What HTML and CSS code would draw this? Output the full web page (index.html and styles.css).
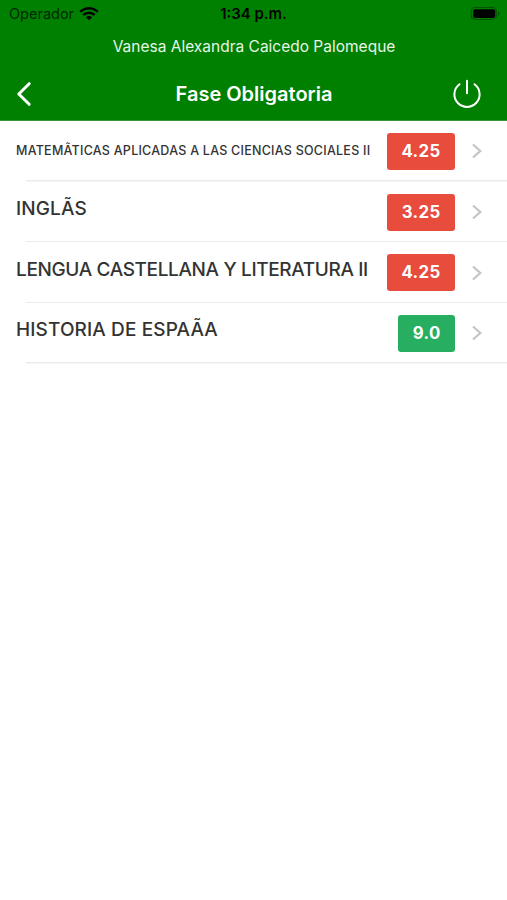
FILE: index.html
```html
<!DOCTYPE html>
<html lang="es">
<head>
    <meta charset="UTF-8">
    <meta name="viewport" content="width=device-width, initial-scale=1.0">
    <title>Fase Obligatoria</title>
    <link rel="stylesheet" href="styles.css">
</head>
<body>
    <header class="header">
        <div class="status-bar">
            <div class="carrier">
                <span class="carrier-name">Operador</span>
                <svg class="wifi" width="20" height="14" viewBox="0 0 20 14" fill="none" stroke="#000" stroke-width="2.5">
                    <path d="M1.2 4.8C6.3 0 13.7 0 18.8 4.8"/>
                    <path d="M4.3 8C7.6 4.9 12.4 4.9 15.7 8"/>
                    <path d="M10 13.2L6.9 10.2C8.7 8.6 11.3 8.6 13.1 10.2Z" fill="#000" stroke="none"/>
                </svg>
            </div>
            <span class="time">1:34 p.m.</span>
            <svg class="battery" width="30" height="14" viewBox="0 0 30 14">
                <rect x="1.3" y=".5" width="25" height="12" rx="3.8" fill="none" stroke="#000" stroke-opacity=".35" stroke-width="1.2"/>
                <rect x="3.2" y="2.2" width="22" height="8.8" rx="2" fill="#000"/>
                <path d="M28 4.5v4c1.8-.8 1.8-3.2 0-4z" fill="#000" fill-opacity=".4"/>
            </svg>
        </div>
        <div class="student"><span class="student-name">Vanesa Alexandra Caicedo Palomeque</span></div>
        <div class="nav-bar">
            <svg class="back" width="18" height="28" viewBox="0 0 18 28" fill="none" stroke="#fff" stroke-width="3" stroke-linecap="round" stroke-linejoin="round">
                <path d="M13.2 3.7L2.8 14L13.2 24.3"/>
            </svg>
            <h1>Fase Obligatoria</h1>
            <svg class="power" width="30" height="30" viewBox="0 0 30 30" fill="none" stroke="#fff" stroke-width="2" stroke-linecap="round">
                <path d="M15 1.8V14.2"/>
                <path d="M7.5 5.2A12.6 12.6 0 1 0 22.5 5.2"/>
            </svg>
        </div>
    </header>

    <ul class="subjects">
        <li class="subject">
            <span class="name name-small">MATEMÃTICAS APLICADAS A LAS CIENCIAS SOCIALES II</span>
            <span class="grade fail">4.25</span>
            <svg class="arrow" width="12" height="18" viewBox="0 0 12 18"><path d="M2 2.5L9.3 9L2 15.5"/></svg>
        </li>
        <li class="subject">
            <span class="name">INGLÃS</span>
            <span class="grade fail">3.25</span>
            <svg class="arrow" width="12" height="18" viewBox="0 0 12 18"><path d="M2 2.5L9.3 9L2 15.5"/></svg>
        </li>
        <li class="subject">
            <span class="name name-long">LENGUA CASTELLANA Y LITERATURA II</span>
            <span class="grade fail">4.25</span>
            <svg class="arrow" width="12" height="18" viewBox="0 0 12 18"><path d="M2 2.5L9.3 9L2 15.5"/></svg>
        </li>
        <li class="subject">
            <span class="name">HISTORIA DE ESPAÃA</span>
            <span class="grade pass">9.0</span>
            <svg class="arrow" width="12" height="18" viewBox="0 0 12 18"><path d="M2 2.5L9.3 9L2 15.5"/></svg>
        </li>
    </ul>
</body>
</html>
```
FILE: styles.css
```css
* {
    box-sizing: border-box;
}

body {
    margin: 0;
    min-height: 100vh;
    font-family: Inter, 'Liberation Sans', sans-serif;
    background-color: #fff;
    color: #333;
}

.header {
    height: 121px;
    background-color: #008000;
    border-bottom: 1px solid #389438;
    color: #fff;
}

.status-bar {
    display: grid;
    grid-template-columns: 1fr auto 1fr;
    align-items: center;
    height: 27px;
    padding: 0 7px;
    color: #000;
}

.carrier {
    display: flex;
    align-items: center;
    gap: 5px;
    padding-left: 2px;
    font-size: 14.5px;
}

.carrier-name {
    color: #002800;
}

.time {
    font-size: 14.9px;
    font-weight: 600;
}

.battery {
    justify-self: end;
}

.student {
    height: 40px;
    padding-left: 1px;
    line-height: 40px;
    text-align: center;
    font-size: 15.5px;
    color: #e6f5e6;
}

.nav-bar {
    display: grid;
    grid-template-columns: 1fr auto 1fr;
    align-items: center;
    height: 53px;
    padding: 0 25px 0 26px;
}

.back {
    margin-left: -10px;
}

h1 {
    margin: 0;
    font-size: 20px;
    font-weight: 600;
}

.power {
    justify-self: end;
}

.subjects {
    margin: 0;
    padding: 0;
    list-style: none;
}

.subject {
    display: flex;
    align-items: center;
    height: 60.7px;
    padding: 0 24px 0 16px;
    background: linear-gradient(#ebebeb, #ebebeb) 26px 100% / 100% 1.5px no-repeat;
}

.name {
    flex: 1;
    padding-bottom: 7px;
    font-size: 19px;
    font-weight: 500;
    letter-spacing: 0.12px;
    white-space: nowrap;
}

.name-small {
    padding-bottom: 2px;
    font-size: 12.5px;
    letter-spacing: 0.25px;
}

.name-long {
    padding-bottom: 6px;
    letter-spacing: -0.36px;
}

.grade {
    height: 37px;
    padding: 0 14.3px;
    border-radius: 3px;
    color: #fff;
    font-size: 16.8px;
    font-weight: 700;
    line-height: 37px;
    letter-spacing: 0.4px;
}

.fail {
    background-color: #e74c3c;
}

.pass {
    background-color: #27ae60;
}

.arrow {
    margin-left: 16px;
    fill: none;
    stroke: #c4c4c6;
    stroke-width: 2.2;
}
```
